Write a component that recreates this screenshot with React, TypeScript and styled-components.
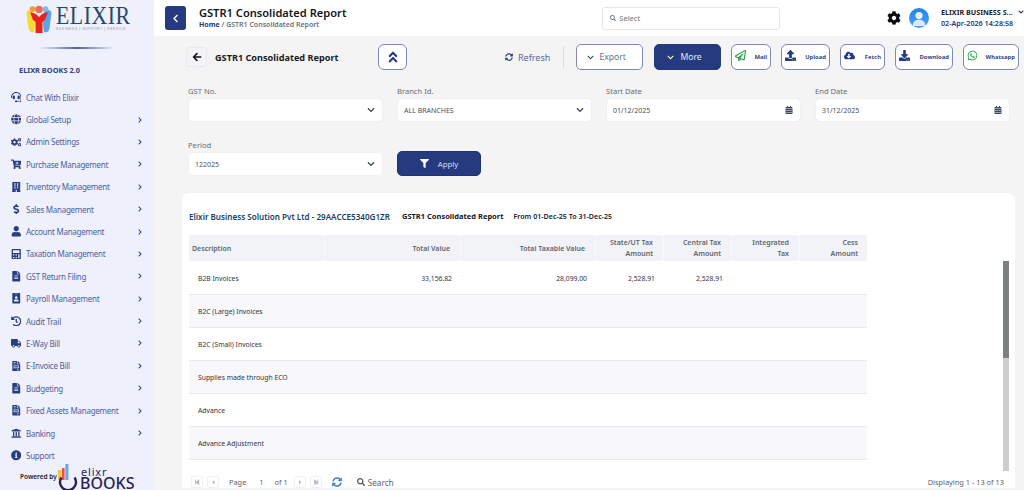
import React from "react";
import styled, { createGlobalStyle } from "styled-components";
import {
  FaHeadset, FaGlobe, FaCogs, FaCartPlus, FaBuilding, FaDollarSign, FaUser, FaCalculator,
  FaFileAlt, FaIdBadge, FaHistory, FaTruck, FaFileInvoice, FaUniversity, FaInfoCircle,
  FaChevronRight, FaChevronLeft, FaChevronDown, FaCog, FaArrowLeft, FaAngleDoubleUp, FaSyncAlt,
  FaRegPaperPlane, FaUpload, FaCloudDownloadAlt, FaDownload, FaWhatsapp, FaCalendarAlt, FaFilter,
  FaSearch, FaStepBackward, FaStepForward, FaCaretLeft, FaCaretRight,
} from "react-icons/fa";

const navy = "#263a7f";
const font = '"Noto Sans", "Open Sans", sans-serif';

const Global = createGlobalStyle`
  html, body { margin: 0; padding: 0; height: 490px; overflow: hidden; background: #f4f4f5; }
  body { font-family: ${font}; }
  * { box-sizing: border-box; }
`;

const Shell = styled.div`
  display: flex;
  width: 1024px;
  height: 490px;
  overflow: hidden;
`;

const Sidebar = styled.aside`
  position: relative;
  width: 154px;
  flex: none;
  height: 490px;
  background: #eef0fb;
  display: flex;
  flex-direction: column;
  overflow: hidden;
`;

const LogoRow = styled.div`
  height: 47px;
  flex: none;
  display: flex;
  align-items: flex-start;
  padding: 5px 0 0 26px;
  gap: 4px;
`;

const LogoWords = styled.div`
  display: flex;
  flex-direction: column;
  color: #27486c;
`;

const LogoName = styled.span`
  font-family: "Liberation Serif", serif;
  font-size: 25.5px;
  line-height: 22px;
  letter-spacing: 0.6px;
  transform: scaleX(0.855);
  transform-origin: left center;
`;

const LogoTag = styled.span`
  font-family: "Liberation Sans", sans-serif;
  font-size: 3.2px;
  line-height: 5px;
  letter-spacing: 0.7px;
  color: #8b93a3;
  white-space: nowrap;
`;

const SideRule = styled.div`
  flex: none;
  width: 76px;
  height: 2px;
  margin-left: 39px;
  background: linear-gradient(90deg, transparent, #4f5fa5 50%, transparent);
`;

const Brand = styled.div`
  flex: none;
  margin: 15px 0 0 19px;
  font-size: 7.4px;
  line-height: 12px;
  font-weight: 700;
  color: #30417f;
  height: 22px;
`;

const NavList = styled.nav`
  display: flex;
  flex-direction: column;
  flex: 1;
`;

const NavRow = styled.div`
  height: 22.4px;
  flex: none;
  display: flex;
  align-items: center;
  padding-left: 6px;
  color: #2f4288;
`;

const NavIcon = styled.span`
  width: 20px;
  flex: none;
  display: flex;
  justify-content: center;
  font-size: 10.5px;
  color: #2b3c80;
`;

const NavLabel = styled.span`
  flex: 1;
  font-size: 8px;
  letter-spacing: -0.26px;
  color: #4f5f9b;
  white-space: nowrap;
`;

const NavArrow = styled.span`
  width: 7px;
  display: flex;
  font-size: 6px;
  margin-right: 10px;
  color: #2b3c80;
`;

const Powered = styled.div`
  position: absolute;
  left: 0;
  top: 464px;
  width: 154px;
  height: 26px;
  padding-left: 20px;
  display: flex;
  align-items: flex-start;
  background: #eef0fb;
`;

const PoweredText = styled.span`
  font-size: 6.5px;
  font-weight: 600;
  color: #1c1c28;
  margin-top: 8px;
  width: 38px;
  flex: none;
  white-space: nowrap;
`;

const PoweredBrand = styled.div`
  display: flex;
  flex-direction: column;
  margin-left: 1px;
  color: #2b1e55;
`;

const PoweredElixr = styled.span`
  font-size: 11px;
  line-height: 9px;
  letter-spacing: 0.8px;
  margin: 3px 0 0 1px;
`;

const PoweredBooks = styled.span`
  font-size: 16px;
  line-height: 12px;
  font-weight: 500;
  margin-top: 1px;
`;

const Main = styled.main`
  flex: 1;
  min-width: 0;
  height: 490px;
  display: flex;
  flex-direction: column;
`;

const TopBar = styled.header`
  height: 36px;
  flex: none;
  background: #fff;
  display: flex;
  align-items: center;
  padding: 0 0 0 11px;
`;

const BackSquare = styled.button`
  width: 21px;
  height: 24px;
  border: 0;
  border-radius: 3px;
  background: ${navy};
  color: #fff;
  display: flex;
  align-items: center;
  justify-content: center;
  font-size: 9px;
  padding: 0;
`;

const TitleBlock = styled.div`
  width: 404px;
  margin-left: 13px;
  display: flex;
  flex-direction: column;
`;

const PageTitle = styled.div`
  font-size: 11.1px;
  line-height: 15px;
  font-weight: 600;
  color: #14141c;
  margin-top: -1px;
  white-space: nowrap;
`;

const Crumbs = styled.div`
  font-size: 7px;
  line-height: 10px;
  font-weight: 600;
  color: #6a6f7c;
  white-space: nowrap;
  b { color: ${navy}; font-weight: 700; }
`;

const TopSearch = styled.div`
  width: 178px;
  height: 23px;
  border: 1px solid #e6e6ea;
  border-radius: 3px;
  background: #fff;
  display: flex;
  align-items: center;
  gap: 3px;
  padding-left: 7px;
  font-size: 7.5px;
  color: #70757f;
`;

const TopRight = styled.div`
  display: flex;
  align-items: center;
  margin-left: 107px;
`;

const GearWrap = styled.span`
  display: flex;
  font-size: 14px;
  color: #0c0c10;
`;

const Avatar = styled.span`
  width: 20px;
  height: 20px;
  margin-left: 8px;
  border-radius: 50%;
  background: linear-gradient(180deg, #1f83ee, #4ba2f4);
  display: flex;
  overflow: hidden;
`;

const UserBlock = styled.div`
  margin-left: 12px;
  width: 77px;
  display: flex;
  flex-direction: column;
`;

const UserName = styled.div`
  font-size: 7.2px;
  line-height: 11px;
  font-weight: 700;
  color: #20202c;
  white-space: nowrap;
`;

const UserDate = styled.div`
  font-size: 7.2px;
  line-height: 11px;
  font-weight: 600;
  color: ${navy};
  white-space: nowrap;
`;

const UserCaret = styled.span`
  display: flex;
  font-size: 6px;
  margin: -13px 0 0 0;
  color: #20202c;
`;

const Content = styled.div`
  flex: 1;
  min-height: 0;
  padding: 8px 9px 2px 28px;
  display: flex;
  flex-direction: column;
`;

const ActionBar = styled.div`
  height: 26px;
  flex: none;
  display: flex;
  align-items: center;
`;

const BackBox = styled.button`
  width: 21px;
  height: 20px;
  flex: none;
  border: 1px solid #e8e9f1;
  border-radius: 3px;
  margin-left: 4px;
  background: #f4f4f6;
  color: #111;
  display: flex;
  align-items: center;
  justify-content: center;
  font-size: 10px;
  padding: 0;
`;

const ActionTitle = styled.div`
  width: 163px;
  flex: none;
  margin-left: 8px;
  font-size: 9.15px;
  font-weight: 700;
  color: #1a1a24;
  white-space: nowrap;
`;

const Collapse = styled.button`
  width: 29px;
  height: 26px;
  flex: none;
  background: #fff;
  border: 1px solid #7d87b6;
  border-radius: 6px;
  color: ${navy};
  display: flex;
  align-items: center;
  justify-content: center;
  font-size: 14px;
  padding: 0;
`;

const RefreshLink = styled.div`
  margin-left: 98px;
  width: 58px;
  flex: none;
  display: flex;
  align-items: center;
  gap: 5px;
  font-size: 9px;
  color: #5a6a9c;
  svg { color: #2d3f82; font-size: 8px; }
`;

const Divider = styled.div`
  width: 1px;
  height: 22px;
  flex: none;
  background: #dcdce0;
  margin-right: 12px;
`;

const TextButton = styled.button<{ $solid?: boolean }>`
  width: 67px;
  height: 26px;
  flex: none;
  margin-right: ${(p) => (p.$solid ? 10 : 11)}px;
  padding: 0 0 0 ${(p) => (p.$solid ? 12 : 10)}px;
  display: flex;
  align-items: center;
  gap: ${(p) => (p.$solid ? 6.5 : 5.5)}px;
  border-radius: 5px;
  border: 1px solid ${(p) => (p.$solid ? navy : "#7d87b6")};
  background: ${(p) => (p.$solid ? navy : "#fff")};
  color: ${(p) => (p.$solid ? "#e6e8f4" : "#66708f")};
  font-family: ${font};
  font-size: 8.6px;
  svg { font-size: 7px; color: ${(p) => (p.$solid ? "#fff" : navy)}; }
`;

const ToolButton = styled.button<{ $w: number; $c?: string }>`
  width: ${(p) => p.$w}px;
  height: 26px;
  flex: none;
  margin-right: 10px;
  padding: 0 3px 0 3px;
  display: flex;
  align-items: center;
  justify-content: space-between;
  border-radius: 6px;
  border: 1px solid #7d87b6;
  background: #fff;
  color: #36477f;
  font-family: ${font};
  font-size: 5.9px;
  font-weight: 700;
  svg { font-size: 11px; color: ${(p) => p.$c || navy}; margin-top: -3px; flex: none; }
`;

const FilterGrid = styled.div`
  display: grid;
  grid-template-columns: repeat(4, 195px);
  column-gap: 14px;
  row-gap: 0;
  margin: 15px 0 0 6px;
`;

const Field = styled.div`
  height: 54px;
  display: flex;
  flex-direction: column;
`;

const FieldLabel = styled.label`
  font-size: 7.6px;
  line-height: 12px;
  height: 13px;
  color: #666c78;
`;

const InputBox = styled.div`
  height: 24px;
  background: #fff;
  border: 1px solid #f0f0f3;
  border-radius: 5px;
  display: flex;
  align-items: center;
  justify-content: space-between;
  padding: 0 7px 0 6px;
  font-size: 7px;
  color: #4a4f5c;
  svg { color: #3a4660; }
`;

const ApplyCell = styled.div`
  display: flex;
  padding-top: 12px;
`;

const ApplyButton = styled.button`
  width: 84px;
  height: 25px;
  border: 1px solid #1f3274;
  border-radius: 5px;
  background: ${navy};
  color: #d9ddef;
  display: flex;
  align-items: center;
  justify-content: center;
  gap: 9px;
  font-family: ${font};
  font-size: 7.8px;
  padding: 0;
  svg { color: #fff; font-size: 9px; }
`;

const Card = styled.section`
  flex: 1;
  min-height: 0;
  background: #fff;
  border-radius: 7px 7px 0 0;
  padding: 17px 6px 0 7px;
  display: flex;
  flex-direction: column;
  overflow: hidden;
`;

const ReportHead = styled.div`
  height: 12px;
  flex: none;
  display: flex;
  align-items: center;
  white-space: nowrap;
`;

const Company = styled.span`
  font-size: 8.1px;
  font-weight: 600;
  color: #1c3f66;
`;

const ReportName = styled.span`
  margin-left: 12px;
  font-size: 7.5px;
  font-weight: 700;
  color: #15151c;
`;

const ReportRange = styled.span`
  margin-left: 10px;
  font-size: 7.1px;
  font-weight: 600;
  color: #20202a;
`;

const TableWrap = styled.div`
  flex: 1;
  min-height: 0;
  display: flex;
  margin-top: 13px;
`;

const TableCol = styled.div`
  width: 678px;
  flex: none;
`;

const HeadRow = styled.div`
  display: grid;
  grid-template-columns: 136px 136px 135px repeat(4, 68px);
  height: 26px;
  background: #f2f3f7;
`;

const HeadCell = styled.div<{ $left?: boolean }>`
  display: flex;
  align-items: center;
  justify-content: ${(p) => (p.$left ? "flex-start" : "flex-end")};
  text-align: ${(p) => (p.$left ? "left" : "right")};
  padding: ${(p) => (p.$left ? "0 0 0 3px" : "0 10px 0 0")};
  font-size: 7px;
  line-height: 11px;
  font-weight: 600;
  color: #5f6470;
  white-space: pre-line;
  border-right: 1px solid #fafafc;
  &:last-child { border-right: 0; }
`;

const BodyBlock = styled.div`
  padding-top: 1px;
`;

const BodyRow = styled.div<{ $alt?: boolean }>`
  display: grid;
  grid-template-columns: 136px 136px 135px repeat(4, 68px);
  height: 33px;
  background: ${(p) => (p.$alt ? "#f8f8fa" : "#fff")};
  border-bottom: 1px solid #e8e9ec;
`;

const BodyCell = styled.div<{ $left?: boolean }>`
  display: flex;
  align-items: center;
  justify-content: ${(p) => (p.$left ? "flex-start" : "flex-end")};
  padding: ${(p) => (p.$left ? "0 0 0 9px" : "0 9px 0 0")};
  font-size: 6.8px;
  color: #30343e;
  white-space: nowrap;
`;

const Track = styled.div`
  width: 6px;
  height: 210px;
  margin: 26px 0 0 136px;
  background: #cdcdcd;
  flex: none;
`;

const Thumb = styled.div`
  height: 97px;
  background: #7b8083;
`;

const Pager = styled.div`
  height: 15px;
  flex: none;
  display: flex;
  align-items: center;
  padding: 3px 5px 0 2px;
  font-size: 7.4px;
  color: #5c6270;
`;

const PagerBtn = styled.span<{ $m?: number }>`
  width: 12px;
  height: 12px;
  margin: 0 4px 0 ${(p) => p.$m || 0}px;
  border: 1px solid #f0f0f3;
  border-radius: 2px;
  display: flex;
  align-items: center;
  justify-content: center;
  font-size: 6.5px;
  color: #b4b8c2;
`;

const PageLabel = styled.span<{ $m: number }>`
  margin-left: ${(p) => p.$m}px;
`;

const PagerRefresh = styled.span`
  margin-left: 6px;
  display: flex;
  font-size: 10px;
  color: #3b82d0;
`;

const PagerSearch = styled.span`
  margin-left: 15px;
  display: flex;
  align-items: center;
  gap: 3px;
  font-size: 8.2px;
  svg { font-size: 8px; color: #555; }
`;

const PagerCount = styled.span`
  margin-left: auto;
`;

const ElixirMark = () => (
  <svg width="26" height="28" viewBox="0 0 26 28">
    <path d="M0.5 8 Q1 5 4 5 L8 6 L9 20 L8 27 Q3 28 2.5 23 Z" fill="#f6d934" />
    <path d="M25.5 8 Q25 5 22 5 L18 6 L17 20 L18 27 Q23 28 23.5 23 Z" fill="#5aa5e6" />
    <path d="M4 7 L10 9 L13 12 L16 9 L22 7 L19 15 L16.5 17 L16.5 28 L9.5 28 L9.5 17 L7 15 Z" fill="#e8231f" />
    <circle cx="6.5" cy="4" r="2.8" fill="#f29a3c" />
    <circle cx="19.5" cy="4" r="2.8" fill="#7cbce8" />
    <circle cx="13" cy="4.5" r="3.8" fill="#ec6e5a" />
  </svg>
);

const BooksMark = () => (
  <svg width="21" height="26" viewBox="0 0 21 26">
    <rect x="0" y="6" width="3.4" height="10" fill="#f2c53c" />
    <rect x="4" y="4" width="2.6" height="12" fill="#e8504a" />
    <rect x="7.4" y="0" width="3" height="16" fill="#6fa4dc" />
    <path d="M3.5 13.5 A8 8 0 1 0 16.5 13.5" fill="none" stroke="#2b1e55" strokeWidth="2.4" />
  </svg>
);

const AvatarFigure = () => (
  <svg width="20" height="20" viewBox="0 0 20 20">
    <circle cx="10" cy="7.5" r="3.6" fill="#e8f1fd" />
    <path d="M3.5 18 Q4 11.5 10 11.5 Q16 11.5 16.5 18 Z" fill="#dbe9fb" />
  </svg>
);

const nav: [React.ReactNode, string, boolean][] = [
  [<FaHeadset />, "Chat With Elixir", false],
  [<FaGlobe />, "Global Setup", true],
  [<FaCogs />, "Admin Settings", true],
  [<FaCartPlus />, "Purchase Management", true],
  [<FaBuilding />, "Inventory Management", true],
  [<FaDollarSign />, "Sales Management", true],
  [<FaUser />, "Account Management", true],
  [<FaCalculator />, "Taxation Management", true],
  [<FaFileAlt />, "GST Return Filing", true],
  [<FaIdBadge />, "Payroll Management", true],
  [<FaHistory />, "Audit Trail", true],
  [<FaTruck />, "E-Way Bill", true],
  [<FaFileInvoice />, "E-Invoice Bill", true],
  [<FaFileAlt />, "Budgeting", true],
  [<FaFileInvoice />, "Fixed Assets Management", true],
  [<FaUniversity />, "Banking", true],
  [<FaInfoCircle />, "Support", false],
];

const rows: [string, string, string, string, string][] = [
  ["B2B Invoices", "33,156.82", "28,099.00", "2,528.91", "2,528.91"],
  ["B2C (Large) Invoices", "", "", "", ""],
  ["B2C (Small) Invoices", "", "", "", ""],
  ["Supplies made through ECO", "", "", "", ""],
  ["Advance", "", "", "", ""],
  ["Advance Adjustment", "", "", "", ""],
];

const heads = ["Total Value", "Total Taxable Value", "State/UT Tax\nAmount", "Central Tax\nAmount", "Integrated\nTax", "Cess\nAmount"];

export default function App() {
  return (
    <>
      <Global />
      <Shell>
        <Sidebar>
          <LogoRow>
            <ElixirMark />
            <LogoWords>
              <LogoName>ELIXIR</LogoName>
              <LogoTag>BUSINESS | SUPPORT | SERVICE</LogoTag>
            </LogoWords>
          </LogoRow>
          <SideRule />
          <Brand>ELIXR BOOKS 2.0</Brand>
          <NavList>
            {nav.map(([icon, label, arrow]) => (
              <NavRow key={label}>
                <NavIcon>{icon}</NavIcon>
                <NavLabel>{label}</NavLabel>
                {arrow && <NavArrow><FaChevronRight /></NavArrow>}
              </NavRow>
            ))}
          </NavList>
          <Powered>
            <PoweredText>Powered by</PoweredText>
            <BooksMark />
            <PoweredBrand>
              <PoweredElixr>elixr</PoweredElixr>
              <PoweredBooks>BOOKS</PoweredBooks>
            </PoweredBrand>
          </Powered>
        </Sidebar>
        <Main>
          <TopBar>
            <BackSquare><FaChevronLeft /></BackSquare>
            <TitleBlock>
              <PageTitle>GSTR1 Consolidated Report</PageTitle>
              <Crumbs><b>Home</b> / GSTR1 Consolidated Report</Crumbs>
            </TitleBlock>
            <TopSearch><FaSearch size={6} />Select</TopSearch>
            <TopRight>
              <GearWrap><FaCog /></GearWrap>
              <Avatar><AvatarFigure /></Avatar>
              <UserBlock>
                <UserName>ELIXIR BUSINESS S...</UserName>
                <UserDate>02-Apr-2026 14:28:58</UserDate>
              </UserBlock>
              <UserCaret><FaChevronDown /></UserCaret>
            </TopRight>
          </TopBar>
          <Content>
            <ActionBar>
              <BackBox><FaArrowLeft /></BackBox>
              <ActionTitle>GSTR1 Consolidated Report</ActionTitle>
              <Collapse><FaAngleDoubleUp /></Collapse>
              <RefreshLink><FaSyncAlt />Refresh</RefreshLink>
              <Divider />
              <TextButton><FaChevronDown />Export</TextButton>
              <TextButton $solid><FaChevronDown />More</TextButton>
              <ToolButton $w={40} $c="#1f9a3c"><FaRegPaperPlane />Mail</ToolButton>
              <ToolButton $w={49}><FaUpload />Upload</ToolButton>
              <ToolButton $w={45}><FaCloudDownloadAlt />Fetch</ToolButton>
              <ToolButton $w={58}><FaDownload />Download</ToolButton>
              <ToolButton $w={56} $c="#25a244"><FaWhatsapp />Whatsapp</ToolButton>
            </ActionBar>
            <FilterGrid>
              <Field>
                <FieldLabel>GST No.</FieldLabel>
                <InputBox><span /><FaChevronDown size={8} /></InputBox>
              </Field>
              <Field>
                <FieldLabel>Branch Id.</FieldLabel>
                <InputBox>ALL BRANCHES<FaChevronDown size={8} /></InputBox>
              </Field>
              <Field>
                <FieldLabel>Start Date</FieldLabel>
                <InputBox>01/12/2025<FaCalendarAlt size={8} /></InputBox>
              </Field>
              <Field>
                <FieldLabel>End Date</FieldLabel>
                <InputBox>31/12/2025<FaCalendarAlt size={8} /></InputBox>
              </Field>
              <Field>
                <FieldLabel>Period</FieldLabel>
                <InputBox>122025<FaChevronDown size={8} /></InputBox>
              </Field>
              <ApplyCell>
                <ApplyButton><FaFilter />Apply</ApplyButton>
              </ApplyCell>
            </FilterGrid>
            <Card>
              <ReportHead>
                <Company>Elixir Business Solution Pvt Ltd - 29AACCE5340G1ZR</Company>
                <ReportName>GSTR1 Consolidated Report</ReportName>
                <ReportRange>From 01-Dec-25 To 31-Dec-25</ReportRange>
              </ReportHead>
              <TableWrap>
                <TableCol>
                  <HeadRow>
                    <HeadCell $left>Description</HeadCell>
                    {heads.map((h) => <HeadCell key={h}>{h}</HeadCell>)}
                  </HeadRow>
                  <BodyBlock>
                    {rows.map((r, i) => (
                      <BodyRow key={r[0]} $alt={i % 2 === 1}>
                        <BodyCell $left>{r[0]}</BodyCell>
                        <BodyCell>{r[1]}</BodyCell>
                        <BodyCell>{r[2]}</BodyCell>
                        <BodyCell>{r[3]}</BodyCell>
                        <BodyCell>{r[4]}</BodyCell>
                        <BodyCell />
                        <BodyCell />
                      </BodyRow>
                    ))}
                  </BodyBlock>
                </TableCol>
                <Track><Thumb /></Track>
              </TableWrap>
              <Pager>
                <PagerBtn><FaStepBackward /></PagerBtn>
                <PagerBtn><FaCaretLeft /></PagerBtn>
                <PageLabel $m={6}>Page</PageLabel>
                <PageLabel $m={13}>1</PageLabel>
                <PageLabel $m={11}>of 1</PageLabel>
                <PagerBtn $m={6}><FaCaretRight /></PagerBtn>
                <PagerBtn><FaStepForward /></PagerBtn>
                <PagerRefresh><FaSyncAlt /></PagerRefresh>
                <PagerSearch><FaSearch />Search</PagerSearch>
                <PagerCount>Displaying 1 - 13 of 13</PagerCount>
              </Pager>
            </Card>
          </Content>
        </Main>
      </Shell>
    </>
  );
}
